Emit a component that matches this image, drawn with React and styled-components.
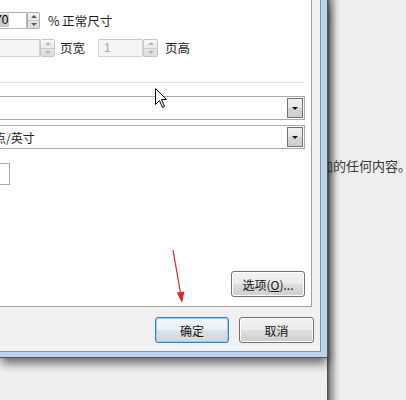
import React from "react";
import styled, { createGlobalStyle } from "styled-components";

const GlobalStyle = createGlobalStyle`
  html, body {
    margin: 0;
    padding: 0;
    background: #f0f0f0;
  }
  body {
    font-family: "Noto Sans CJK SC", "Noto Sans", sans-serif;
  }
`;

const Page = styled.div`
  position: relative;
  display: grid;
  width: 406px;
  height: 400px;
  overflow: hidden;
  background: #efefef;
  & > * {
    grid-area: 1 / 1;
    align-self: start;
    justify-self: start;
  }
`;

const BackText = styled.div`
  margin: 157px 0 0 320px;
  font-size: 13px;
  line-height: 18px;
  color: #333;
  white-space: nowrap;
`;

const EdgeShadow = styled.div`
  margin-left: 327px;
  width: 14px;
  height: 400px;
  z-index: 1;
  background: linear-gradient(
    to right,
    rgba(40, 40, 40, 0.85),
    rgba(60, 60, 60, 0.5) 25%,
    rgba(120, 120, 120, 0.15) 70%,
    rgba(0, 0, 0, 0)
  );
`;

/* window frame: blue glass border + outer dark line */
const Frame = styled.div`
  z-index: 2;
  width: 328px;
  height: 358px;
  box-sizing: border-box;
  background: #bcd5ee;
  border-right: 1px solid #4a5561;
  border-bottom: 1px solid #4a5561;
  padding: 0 6px 5px 0;
  box-shadow: 0 6px 10px -1px rgba(0, 0, 0, 0.6);
`;

const Client = styled.div`
  width: 321px;
  height: 352px;
  box-sizing: border-box;
  background: #f0f0f0;
  border-right: 1px solid #8193a8;
  border-bottom: 1px solid #8193a8;
  display: flex;
  flex-direction: column;
`;

const Panel = styled.div`
  width: 312px;
  height: 307px;
  flex-shrink: 0;
  box-sizing: border-box;
  background: #fff;
  border-right: 1px solid #a0a0a0;
  border-bottom: 1px solid #a0a0a0;
  padding-right: 6px;
  display: flex;
  flex-direction: column;
  overflow: hidden;
  font-size: 12px;
  color: #1a1a1a;
`;

const Row = styled.div`
  display: flex;
  align-items: center;
  height: ${(p) => p.$h}px;
  margin-top: ${(p) => p.$mt}px;
`;

const EditBox = styled.div`
  flex-shrink: 0;
  box-sizing: border-box;
  width: ${(p) => p.$w}px;
  height: 100%;
  margin-left: ${(p) => p.$ml || 0}px;
  padding-left: ${(p) => p.$pl || 4}px;
  border: 1px solid ${(p) => (p.$disabled ? "#d4d4d4" : "#b5b9c2")};
  border-top-color: ${(p) => (p.$disabled ? "#c8c8c8" : "#abadb3")};
  background: ${(p) => (p.$disabled ? "#f4f4f4" : "#fff")};
  color: ${(p) => (p.$disabled ? "#a3a3a3" : "#000")};
  display: flex;
  align-items: center;
  font-family: "Liberation Sans", Arial, sans-serif;
  font-size: 12px;
`;

const Sel = styled.span`
  background: #cdcdcd;
  line-height: 13px;
  padding-right: 1px;
`;

const SpinBox = styled.div`
  flex-shrink: 0;
  box-sizing: border-box;
  width: ${(p) => p.$w}px;
  height: 100%;
  border: 1px solid ${(p) => (p.$disabled ? "#c6c6c6" : "#a9a9a9")};
  border-radius: 2px;
  display: flex;
  flex-direction: column;
  overflow: hidden;
`;

const SpinHalf = styled.div`
  flex: 1;
  display: flex;
  align-items: center;
  justify-content: center;
  background: ${(p) =>
    p.$down
      ? "linear-gradient(#e6e6e6, #dcdcdc)"
      : "linear-gradient(#f6f6f6, #e9e9e9)"};
  border-top: ${(p) => (p.$down ? "1px solid #c9c9c9" : "none")};
`;

const Tri = styled.span`
  width: 0;
  height: 0;
  border-left: ${(p) => p.$s}px solid transparent;
  border-right: ${(p) => p.$s}px solid transparent;
  ${(p) =>
    p.$up
      ? `border-bottom: ${p.$s}px solid ${p.$c};`
      : `border-top: ${p.$s}px solid ${p.$c};`}
`;

const Label = styled.span`
  margin-left: ${(p) => p.$ml}px;
  white-space: nowrap;
  line-height: 16px;
  font-size: 12.5px;
`;

const Separator = styled.div`
  height: 1px;
  width: 305px;
  flex-shrink: 0;
  margin-top: 25px;
  background: #dfdfdf;
`;

const Combo = styled.div`
  flex-shrink: 0;
  box-sizing: border-box;
  height: 24px;
  margin: ${(p) => p.$mt}px 0 0 -10px;
  border: 1px solid #a9a9a9;
  background: #fff;
  display: flex;
  align-items: center;
  padding: 0 1px 0 4px;
`;

const ComboText = styled.span`
  flex: 1;
  font-size: 12px;
  white-space: nowrap;
  color: #1a1a1a;
  margin-left: ${(p) => p.$shift || 0}px;
`;

const DropBtn = styled.div`
  width: 16px;
  height: 20px;
  box-sizing: border-box;
  border: 1px solid #707070;
  background: linear-gradient(#f2f2f2, #e6e6e6 50%, #d6d6d6 51%, #cdcdcd);
  display: flex;
  align-items: center;
  justify-content: center;
`;

const SmallBox = styled.div`
  flex-shrink: 0;
  width: 20px;
  height: 22px;
  box-sizing: border-box;
  margin: 14px 0 0 -10px;
  border: 1px solid #a9a9a9;
`;

const Button = styled.button`
  box-sizing: border-box;
  width: ${(p) => p.$w}px;
  height: 26px;
  padding: 0;
  border-radius: 3px;
  border: 1px solid ${(p) => (p.$default ? "#3c7fb1" : "#707070")};
  background: ${(p) =>
    p.$default
      ? "linear-gradient(#f4f8fb, #ebf0f4 50%, #dce3e9 51%, #cfd7de)"
      : "linear-gradient(#f2f2f2, #ebebeb 50%, #dddddd 51%, #cfcfcf)"};
  box-shadow: inset 0 0 0 1px ${(p) => (p.$default ? "#8fd0f2" : "#fcfcfc")};
  font-family: "Noto Sans CJK SC", sans-serif;
  font-size: 12px;
  color: #111;
  display: flex;
  align-items: center;
  justify-content: center;
`;

const OptionsButton = styled(Button)`
  align-self: flex-end;
  margin: auto 0 9px 0;
`;

const Footer = styled.div`
  flex: 1;
  display: flex;
  justify-content: flex-end;
  align-items: flex-start;
  gap: 10px;
  padding: 10px 6px 0 0;
`;

const Overlay = styled.svg`
  position: absolute;
  left: 0;
  top: 0;
  z-index: 5;
  pointer-events: none;
`;

function Spinner({ w, disabled }) {
  const c = disabled ? "#b4b4b4" : "#4a5a78";
  return (
    <SpinBox $w={w} $disabled={disabled}>
      <SpinHalf>
        <Tri $up $s={3} $c={c} />
      </SpinHalf>
      <SpinHalf $down>
        <Tri $s={3} $c={c} />
      </SpinHalf>
    </SpinBox>
  );
}

export default function App() {
  return (
    <>
      <GlobalStyle />
      <Page>
        <BackText>加的任何内容。</BackText>
        <EdgeShadow />
        <Frame>
          <Client>
            <Panel>
              <Row $h={17} $mt={12}>
                <EditBox $w={57} $ml={-30} $pl={24}>
                  <Sel>70</Sel>
                </EditBox>
                <Spinner w={13} />
                <Label $ml={8}>% 正常尺寸</Label>
              </Row>
              <Row $h={18} $mt={10}>
                <EditBox $w={60} $ml={-20} $disabled />
                <Spinner w={15} disabled />
                <Label $ml={5}>页宽</Label>
                <EditBox $w={45} $ml={13} $pl={5} $disabled>
                  1
                </EditBox>
                <Spinner w={15} disabled />
                <Label $ml={7}>页高</Label>
              </Row>
              <Separator />
              <Combo $mt={13}>
                <ComboText />
                <DropBtn>
                  <Tri $s={3.5} $c="#111" />
                </DropBtn>
              </Combo>
              <Combo $mt={5}>
                <ComboText $shift={-1}>点/英寸</ComboText>
                <DropBtn>
                  <Tri $s={3.5} $c="#111" />
                </DropBtn>
              </Combo>
              <SmallBox />
              <OptionsButton $w={74}>
                选项(<u>O</u>)...
              </OptionsButton>
            </Panel>
            <Footer>
              <Button $w={74} $default>
                确定
              </Button>
              <Button $w={75}>取消</Button>
            </Footer>
          </Client>
        </Frame>
        <Overlay width="406" height="400" viewBox="0 0 406 400">
          <line x1="173" y1="250" x2="180.5" y2="293" stroke="#e02424" strokeWidth="1.2" />
          <polygon points="176.8,292.6 184.4,291.4 182,303" fill="#e02424" />
          <path
            d="M155.5 88.5 L155.5 104.5 L159.5 100.5 L162.5 107.5 L164.5 106.5 L161.5 99.5 L166.5 99.5 Z"
            fill="#fff"
            stroke="#000"
            strokeWidth="1"
          />
        </Overlay>
      </Page>
    </>
  );
}
